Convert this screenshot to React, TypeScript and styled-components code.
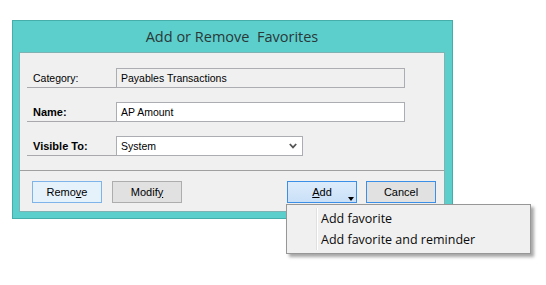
import React from 'react';
import styled, { createGlobalStyle } from 'styled-components';

const GlobalStyle = createGlobalStyle`
  html, body {
    margin: 0;
    padding: 0;
    background: #ffffff;
  }
  body {
    font-family: "Liberation Sans", Arial, sans-serif;
  }
`;

const Page = styled.div`
  padding: 20px 0 0 12px;
  width: 546px;
  height: 285px;
  box-sizing: border-box;
`;

const Window = styled.div`
  width: 441px;
  height: 199px;
  box-sizing: border-box;
  background: #5ccfcd;
  border: 1px solid #45aeab;
  padding: 0 7px 6px 6px;
  display: flex;
  flex-direction: column;
`;

const TitleBar = styled.div`
  height: 30px;
  display: flex;
  align-items: center;
  justify-content: center;
  font-family: "Open Sans", "Noto Sans", sans-serif;
  font-size: 14.5px;
  color: #2a3838;
  white-space: pre;
  padding-bottom: 1px;
`;

const Panel = styled.div`
  flex: 1;
  background: #f0f0f0;
  border: 1px solid #7fb3b3;
  display: flex;
  flex-direction: column;
`;

const Fields = styled.div`
  padding: 15px 0 14px 7px;
  display: flex;
  flex-direction: column;
  gap: 14px;
`;

const Row = styled.div`
  display: flex;
  height: 20px;
`;

const Label = styled.div<{ $bold?: boolean }>`
  width: 83px;
  padding-left: 6px;
  border-bottom: 1px solid #a9a9ad;
  display: flex;
  align-items: center;
  padding-top: 1px;
  font-size: ${(p) => (p.$bold ? '11px' : '10.5px')};
  font-weight: ${(p) => (p.$bold ? 700 : 400)};
  color: #000;
`;

const Field = styled.div<{ $width: number; $readOnly?: boolean }>`
  width: ${(p) => p.$width}px;
  box-sizing: border-box;
  height: 20px;
  border: 1px solid #abadb3;
  background: ${(p) => (p.$readOnly ? '#f0f0f0' : '#ffffff')};
  display: flex;
  align-items: center;
  justify-content: space-between;
  padding: 0 5px 0 4px;
  font-size: 10.5px;
  color: #000;
`;

const Chevron = () => (
  <svg width="8" height="6" viewBox="0 0 8 6">
    <path d="M0.8 1 L4 4.4 L7.2 1" fill="none" stroke="#555" strokeWidth="1.8" />
  </svg>
);

const ButtonBar = styled.div`
  border-top: 1px solid #a0a0a0;
  padding: 10px 8px 0 12px;
  display: flex;
  align-items: flex-start;
`;

const Group = styled.div`
  display: flex;
  gap: 10px;
`;

const Spacer = styled.div`
  flex: 1;
`;

type Tone = 'focus' | 'plain' | 'default' | 'hot';

const toneStyles: Record<Tone, string> = {
  focus: 'background: #e5f1fb; border-color: #7eb4ea;',
  plain: 'background: #e1e1e1; border-color: #adadad;',
  default: 'background: #e1e1e1; border-color: #3c8fe6;',
  hot: 'background: linear-gradient(#ddecfc, #c9e0f7); border-color: #3c8fe6;',
};

const Button = styled.div<{ $tone: Tone }>`
  position: relative;
  width: 70px;
  height: 22px;
  box-sizing: border-box;
  border: 1px solid;
  ${(p) => toneStyles[p.$tone]}
  display: flex;
  align-items: center;
  justify-content: center;
  font-size: 11px;
  color: #000;
  padding-bottom: 1px;
  u {
    text-underline-offset: 1px;
  }
`;

const SplitArrow = styled.span`
  position: absolute;
  left: 60px;
  top: 15px;
  width: 0;
  height: 0;
  border-left: 3px solid transparent;
  border-right: 3px solid transparent;
  border-top: 4px solid #000;
`;

const AddWrap = styled.div`
  position: relative;
  margin-right: 9px;
`;

const Menu = styled.div`
  position: absolute;
  left: -1px;
  top: 23px;
  width: 245px;
  height: 50px;
  box-sizing: border-box;
  background: #f0f0f0;
  border: 1px solid #979797;
  box-shadow: 3px 3px 3px rgba(0, 0, 0, 0.35);
  padding: 3px 0;
  display: flex;
  flex-direction: column;
  z-index: 10;
  &::before {
    content: '';
    position: absolute;
    left: 29px;
    top: 3px;
    bottom: 3px;
    width: 1px;
    background: #e0e0e0;
    border-right: 1px solid #ffffff;
  }
`;

const MenuItem = styled.div`
  height: 21px;
  display: flex;
  align-items: center;
  padding-left: 34px;
  font-family: "Open Sans", "Noto Sans", sans-serif;
  font-size: 12.5px;
  color: #0a0a0a;
  white-space: nowrap;
`;

export default function App() {
  return (
    <>
      <GlobalStyle />
      <Page>
        <Window>
          <TitleBar>{'Add or Remove  Favorites'}</TitleBar>
          <Panel>
            <Fields>
              <Row>
                <Label>Category:</Label>
                <Field $width={289} $readOnly>
                  Payables Transactions
                </Field>
              </Row>
              <Row>
                <Label $bold>Name:</Label>
                <Field $width={289}>AP Amount</Field>
              </Row>
              <Row>
                <Label $bold>Visible To:</Label>
                <Field $width={187}>
                  System
                  <Chevron />
                </Field>
              </Row>
            </Fields>
            <ButtonBar>
              <Group>
                <Button $tone="focus">
                  <span>
                    Remo<u>v</u>e
                  </span>
                </Button>
                <Button $tone="plain">
                  <span>
                    Modif<u>y</u>
                  </span>
                </Button>
              </Group>
              <Spacer />
              <AddWrap>
                <Button $tone="hot">
                  <span>
                    <u>A</u>dd
                  </span>
                  <SplitArrow />
                </Button>
                <Menu>
                  <MenuItem>Add favorite</MenuItem>
                  <MenuItem>Add favorite and reminder</MenuItem>
                </Menu>
              </AddWrap>
              <Button $tone="default">Cancel</Button>
            </ButtonBar>
          </Panel>
        </Window>
      </Page>
    </>
  );
}
